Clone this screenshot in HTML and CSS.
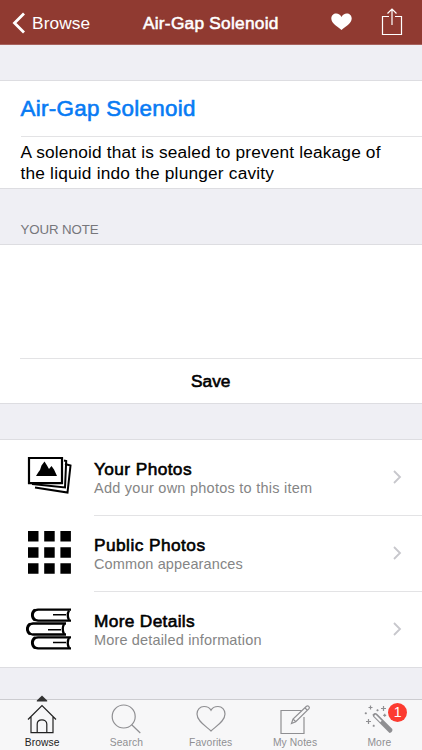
FILE: index.html
```html
<!DOCTYPE html>
<html lang="en">
<head>
<meta charset="utf-8">
<title>Air-Gap Solenoid</title>
<link rel="stylesheet" href="styles.css">
</head>
<body>
<header class="nav">
  <a class="back">
    <svg width="13" height="22" viewBox="0 0 13 22"><path d="M12 1.500 2.500 11l9.500 9.500" fill="none" stroke="#fff" stroke-width="2.800"/></svg>
    <span class="back-label">Browse</span>
  </a>
  <h1 class="nav-title">Air-Gap Solenoid</h1>
  <div class="actions">
    <svg class="heart" width="21" height="18" viewBox="0 0 21 18"><path d="M10.500 17C7 13.700 .3 10.500 .3 5.500C.3 2.500 2.500 .5 5.200 .5C7.500 .5 9.500 1.700 10.500 4C11.500 1.700 13.500 .5 15.800 .5C18.500 .5 20.700 2.500 20.700 5.500C20.700 10.500 14 13.700 10.500 17Z" fill="#fff"/></svg>
    <svg class="share" width="22" height="29" viewBox="0 0 22 29"><path d="M8 9.500H1.500v18h19v-18H14M11 18V2M6.500 6.500 11 2l4.500 4.500" fill="none" stroke="#fff" stroke-width="1.200"/></svg>
  </div>
</header>
<main>
  <section class="card item">
    <h2 class="item-title"><span>Air-Gap Solenoid</span></h2>
    <p class="item-text"><span class="line1">A solenoid that is sealed to prevent leakage of</span><br><span class="line2">the liquid indo the plunger cavity</span></p>
  </section>
  <h3 class="label"><span>YOUR NOTE</span></h3>
  <section class="card note">
    <div class="note-field"></div>
    <div class="save"><span>Save</span></div>
  </section>
  <section class="card links">
    <div class="link">
      <div class="link-icon"><svg width="46" height="40" viewBox="0 0 46 40">
        <path d="M38 8 43.500 9.500 40.500 36.500 8 31.500" fill="none" stroke="#000" stroke-width="2"/>
        <path d="M37 4.500 39.200 5 38 31.500 5 28" fill="none" stroke="#000" stroke-width="2"/>
        <path d="M2 2H35V27.200H2Z" fill="#fff" stroke="#000" stroke-width="2.200"/>
        <path d="M9 20 11.500 16 13 14 14.500 9.500 17.500 5.500 20 9.500 22 13 24.500 10 27 13.500 30 20Z"/>
      </svg></div>
      <div class="link-body"><div class="link-text"><strong class="t1">Your Photos</strong><span class="s1">Add your own photos to this item</span></div>
      <svg class="chevron" width="9" height="14" viewBox="0 0 9 14"><path d="M1 1l6 6-6 6" fill="none" stroke="#c7c7cc" stroke-width="1.800"/></svg></div>
    </div>
    <div class="link">
      <div class="link-icon"><svg width="46" height="46" viewBox="0 0 46 46">
        <path d="M1 1h10.500v10.500H1ZM17.200 1h10.500v10.500H17.200ZM33.400 1h10.500v10.500H33.400ZM1 17.200h10.500v10.500H1ZM17.200 17.200h10.500v10.500H17.200ZM33.400 17.200h10.500v10.500H33.400ZM1 33.300h10.500v10.500H1ZM17.200 33.300h10.500v10.500H17.200ZM33.400 33.300h10.500v10.500H33.400Z"/>
      </svg></div>
      <div class="link-body"><div class="link-text"><strong class="t2">Public Photos</strong><span class="s2">Common appearances</span></div>
      <svg class="chevron" width="9" height="14" viewBox="0 0 9 14"><path d="M1 1l6 6-6 6" fill="none" stroke="#c7c7cc" stroke-width="1.800"/></svg></div>
    </div>
    <div class="link">
      <div class="link-icon"><svg width="46" height="42" viewBox="0 0 46 42">
        <g fill="none" stroke="#000">
          <path d="M45 1.700H12L8 2.500M8 11.700 12 12.700H45M40 15.500H7L3 16.300M3 25.500 7 26.500H40M45 29.300H12L8 30M8 39.500 12 40.300H45" stroke-width="2.300"/>
          <path d="M9 2C5.500 4.500 5.500 9.500 9 12.200M4 16C.5 18.500.5 23.500 4 26M9 29.700C5.500 32.200 5.500 37.200 9 39.900" stroke-width="2.900"/>
          <path d="M43 2.500Q40.500 7 43 12M38 16Q35.500 21 38 26M43 29.700Q40.500 34.500 43 40" stroke-width="2.300"/>
          <path d="M27 6.700H40M22 21.800H35M27 34.500H40" stroke-width="1.500"/>
        </g>
      </svg></div>
      <div class="link-body"><div class="link-text"><strong class="t3">More Details</strong><span class="s3">More detailed information</span></div>
      <svg class="chevron" width="9" height="14" viewBox="0 0 9 14"><path d="M1 1l6 6-6 6" fill="none" stroke="#c7c7cc" stroke-width="1.800"/></svg></div>
    </div>
  </section>
</main>
<nav class="tabs">
  <div class="tab active">
    <svg class="marker" width="12" height="7" viewBox="0 0 12 7"><path d="M.8 5.500 6 .5l5.200 5v1H.8Z" fill="#333"/></svg>
    <svg class="home" width="36" height="34" viewBox="0 0 36 34"><path d="M4 18.500 18 4.500 32 18.500M7 15.500V31.700H13.200V23C13.200 17.400 22.800 17.400 22.800 23V31.700H29V15.500M13.200 31.700H22.800"/></svg>
    <span>Browse</span>
  </div>
  <div class="tab">
    <svg width="36" height="34" viewBox="0 0 36 34"><circle cx="15.700" cy="15.500" r="11.500"/><path d="M23.700 23.800 32.300 32"/></svg>
    <span>Search</span>
  </div>
  <div class="tab">
    <svg width="36" height="34" viewBox="0 0 36 34"><path d="M18 30C13.500 25.500 4 20.500 4 13C4 8.500 7 5.500 11 5.500C14.200 5.500 16.800 7 18 9.300C19.200 7 21.800 5.500 25 5.500C29 5.500 32 8.500 32 13C32 20.500 22.500 25.500 18 30Z"/></svg>
    <span>Favorites</span>
  </div>
  <div class="tab">
    <svg width="36" height="34" viewBox="0 0 36 34"><path d="M24.500 9.500H4V32.500H27V16"/><path d="M14.500 22.500 16 18 29.500 5.200C31 4 33.200 6 32 7.700L18.700 20.700ZM16 18 18.700 20.700M27.800 6.800 30.500 9.400"/></svg>
    <span>My Notes</span>
  </div>
  <div class="tab">
    <svg width="36" height="34" viewBox="0 0 36 34"><path d="M12 13.200Q14 11 16.300 13L31.300 28Q32 31 28.500 32L12.300 15.800Q11.300 14.400 12 13.200Z" stroke="none" fill="#8f8f92"/><path d="M13.800 14.300 20 20.500" stroke="#f7f7f8" stroke-width="2"/><path d="M9.500 4.500v4M7.500 6.500h4M22.500 5v5M20 7.500h5M7.500 18v5M5 20.500h5M23.700 12.800v3M22.200 14.300h3M16.500 8.300v2M15.500 9.300h2M4.800 11.300v2M3.800 12.300h2M12.700 23.800v2M11.700 24.800h2"/></svg>
    <b class="badge">1</b>
    <span>More</span>
  </div>
</nav>
</body>
</html>
```
FILE: styles.css
```css
* { box-sizing: border-box; margin: 0; padding: 0; }
html, body { height: 750px; overflow: hidden; }
body {
  width: 422px;
  display: flex;
  flex-direction: column;
  background: #efeff4;
  color: #000;
  font-family: "Liberation Sans", Arial, sans-serif;
  font-size: 17.3px;
  white-space: nowrap;
}
svg { display: block; flex: none; }
h1, h2, h3, strong { font-weight: 400; }
.nav {
  height: 45px;
  flex: none;
  display: grid;
  grid-template-columns: 143px 136px 1fr;
  align-items: center;
  background: #903a31;
  border-bottom: 1px solid #a7625d;
  color: #fff;
  padding-top: 2px;
}
.back { display: flex; align-items: center; padding-left: 12px; }
.back-label { margin-left: 7px; letter-spacing: .1px; }
.nav-title { font-size: 17.3px; -webkit-text-stroke: .55px #fff; letter-spacing: .25px; }
.actions { display: flex; align-items: center; padding-left: 51.500px; margin-top: -3px; }
.heart { margin-top: 1px; }
.share { margin-left: 29px; }
main { flex: 1; }
.card { background: #fff; border-top: 1px solid #dddde1; border-bottom: 1px solid #dddde1; }
.item { margin-top: 35px; height: 109px; padding-left: 20.500px; }
.item-title {
  height: 56px;
  line-height: 56px;
  border-bottom: 1px solid #e3e3e5;
  color: #087bf4;
  font-size: 22.400px;
  letter-spacing: .3px;
  -webkit-text-stroke: .6px #087bf4;
}
.item-text { padding-top: 5px; line-height: 20.600px; }
.line1 { letter-spacing: .160px; }
.line2 { letter-spacing: .2px; }
.label { height: 55px; padding: 31px 0 0 20.500px; font-size: 13.300px; line-height: 20px; letter-spacing: -.12px; color: #76767b; }
.note { height: 160px; }
.note-field { height: 113px; }
.save {
  margin-left: 20px;
  border-top: 1px solid #e3e3e5;
  height: 45px;
  line-height: 44px;
  padding-left: 171px;
  -webkit-text-stroke: .6px #000;
}
.links { margin-top: 35px; height: 229px; }
.link { display: flex; height: 76px; }
.link-icon { width: 94px; padding-left: 27px; display: flex; align-items: center; padding-bottom: 3px; }
.link:first-child .link-icon { padding-bottom: 4px; }
.link:last-child .link-icon { padding: 0 0 3px 26px; }
.link-body { flex: 1; display: flex; border-bottom: 1px solid #e3e3e5; }
.link:last-child .link-body { border: 0; }
.link-text { width: 299px; padding-top: 19px; display: flex; flex-direction: column; align-items: flex-start; }
.link-text strong { line-height: 20px; -webkit-text-stroke: .6px #000; }
.link-text span { font-size: 14.500px; line-height: 18px; color: #858585; }
.link-text .t1 { letter-spacing: .4px; }
.link-text .t2 { letter-spacing: .45px; }
.link-text .t3 { letter-spacing: .33px; }
.link-text .s1 { letter-spacing: .25px; }
.link-text .s2 { letter-spacing: .12px; }
.link-text .s3 { letter-spacing: .16px; }
.chevron { margin-top: 30px; }
.tabs {
  height: 51px;
  flex: none;
  display: grid;
  grid-template-columns: repeat(5, 84.300px);
  background: #f7f7f8;
  border-top: 1px solid #ccccd0;
}
.tab { position: relative; display: flex; flex-direction: column; align-items: center; color: #8f8f92; font-size: 10.300px; line-height: 16px; letter-spacing: .1px; padding-top: 1px; }
.tab svg { fill: none; stroke: #8f8f92; stroke-width: 1.200; }
.tab .home { stroke: #222; }
.tab .marker { position: absolute; top: -5px; left: 36px; stroke: none; }
.tab.active { color: #222; }
.badge {
  position: absolute;
  left: 51px;
  top: 3px;
  width: 19px;
  height: 19px;
  border-radius: 50%;
  background: #fc3b30;
  color: #fff;
  font-size: 14px;
  font-weight: 400;
  line-height: 19px;
  text-align: center;
}
```
